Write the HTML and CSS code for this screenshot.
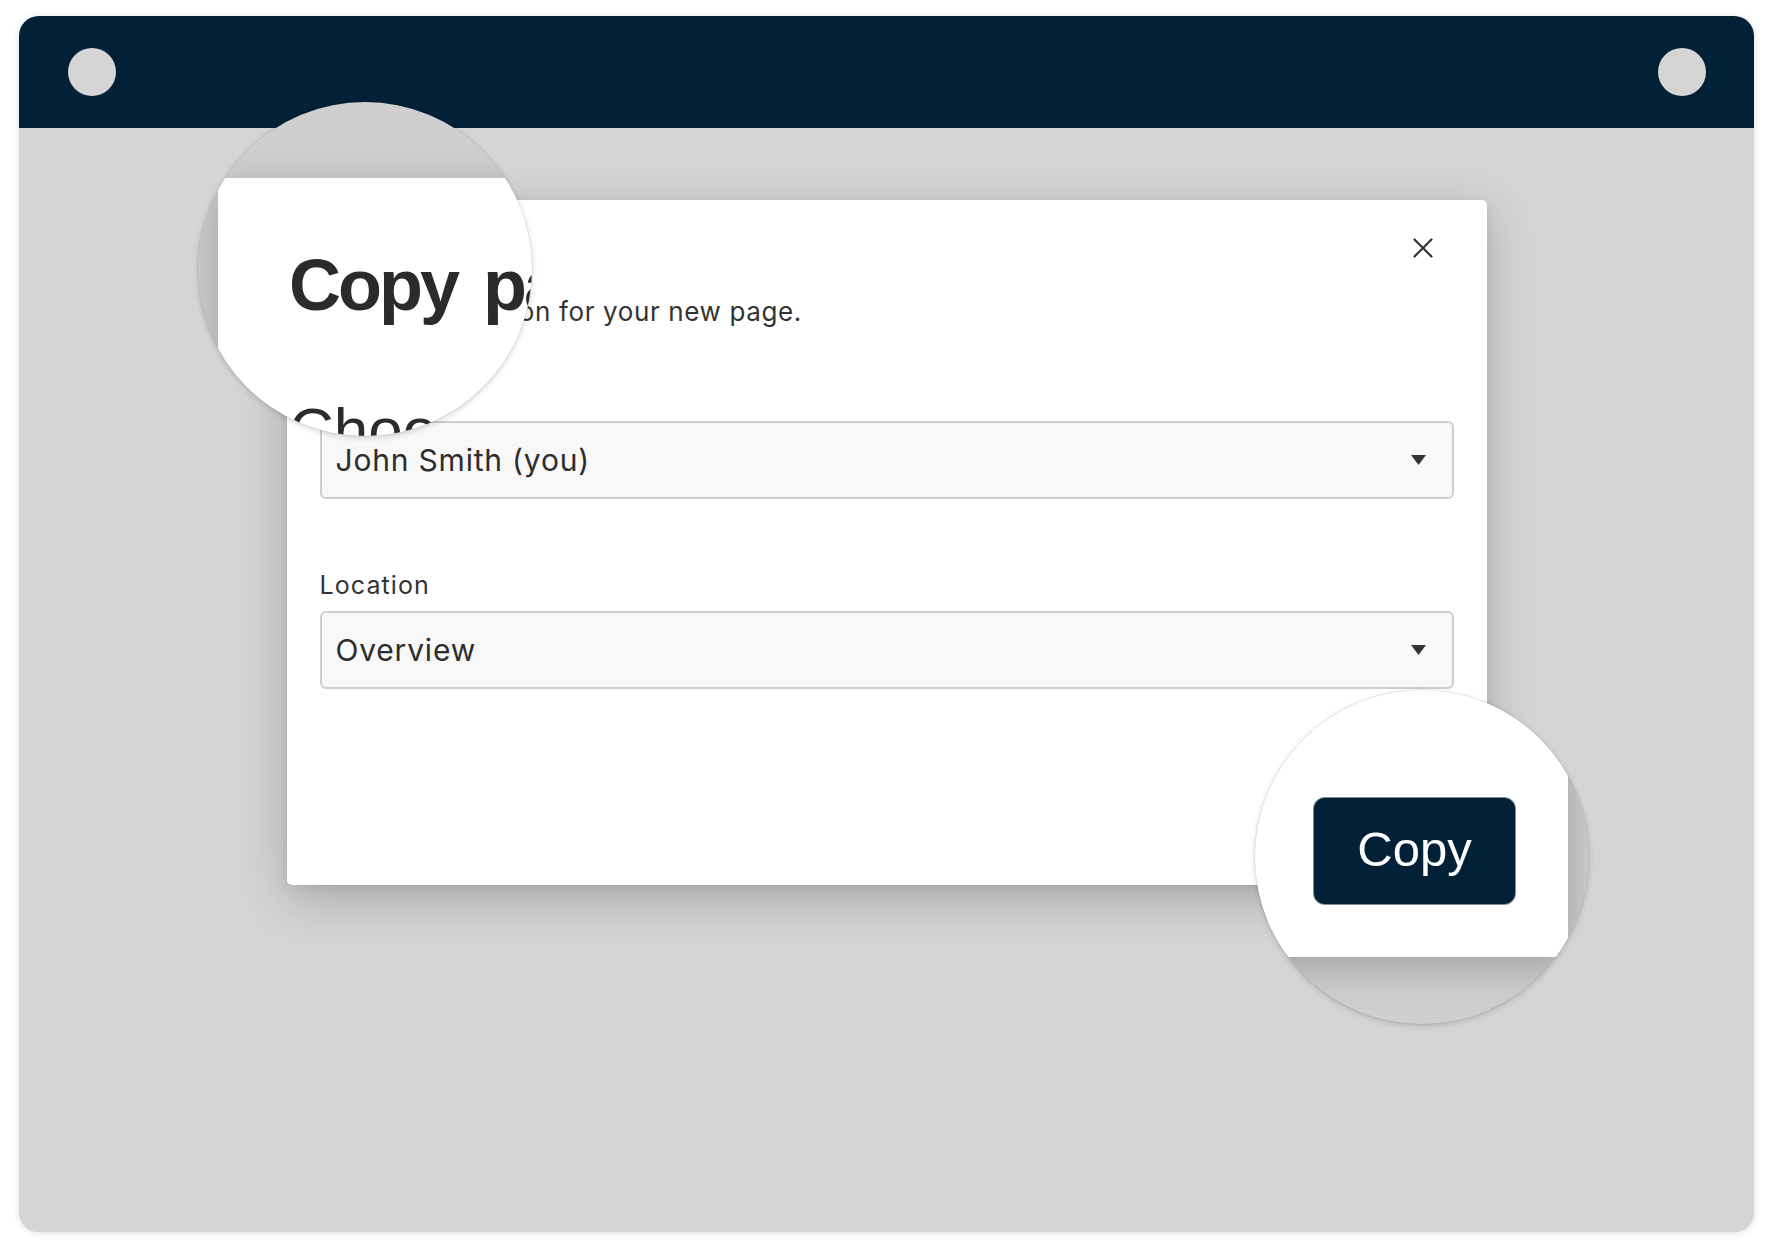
FILE: index.html
```html
<!DOCTYPE html>
<html lang="en">
<head>
<meta charset="utf-8">
<title>Copy page</title>
<link rel="stylesheet" href="styles.css">
</head>
<body>
  <div class="frame">
    <div class="titlebar">
      <span class="dot"></span>
      <span class="dot"></span>
    </div>
    <div class="stage">
      <div class="dialog">
        <div class="dialog-header">
          <h2 class="dialog-title">Copy page</h2>
          <button class="close" aria-label="Close">
            <svg width="20" height="20" viewBox="0 0 20 20"><path d="M1.5 1.5 L18.5 18.5 M18.5 1.5 L1.5 18.5" stroke="#333" stroke-width="2.2" stroke-linecap="round" fill="none"/></svg>
          </button>
        </div>
        <p class="dialog-desc">Choose a location for your new page.</p>
        <div class="field field-first">
          <div class="field-label">Owner</div>
          <div class="select">
            <span class="select-value">John Smith (you)</span>
            <svg class="caret" width="15" height="10" viewBox="0 0 15 10"><polygon points="0,0 15,0 7.5,10" fill="#333"/></svg>
          </div>
        </div>
        <div class="field field-second">
          <div class="field-label">Location</div>
          <div class="select">
            <span class="select-value">Overview</span>
            <svg class="caret" width="15" height="10" viewBox="0 0 15 10"><polygon points="0,0 15,0 7.5,10" fill="#333"/></svg>
          </div>
        </div>
        <div class="dialog-footer">
          <button class="btn-primary">Copy</button>
        </div>
      </div>
    </div>

    <div class="lens lens-top">
      <div class="lens-panel lens-panel-tl">
        <div class="lens-heading">Copy page</div>
        <div class="lens-desc">Choose a location for your new page.</div>
      </div>
    </div>

    <div class="lens lens-bottom">
      <div class="lens-panel lens-panel-br">
        <div class="lens-btn">Copy</div>
      </div>
    </div>
  </div>
</body>
</html>
```

FILE: styles.css
```css
* { box-sizing: border-box; }

html, body {
  margin: 0;
  background: #ffffff;
}

body {
  padding: 16px 20px 24px 19px;
  font-family: "Inter", "Noto Sans", sans-serif;
  color: #2d2d2d;
}

.frame {
  position: relative;
  width: 1735px;
  height: 1216px;
  border-radius: 20px;
  overflow: hidden;
  box-shadow: 0 1px 7px rgba(0, 0, 0, 0.13);
  background: #d5d5d5;
}

.titlebar {
  height: 112px;
  background: #022036;
  display: flex;
  align-items: center;
  justify-content: space-between;
  padding: 0 48px 0 49px;
}

.dot {
  width: 48px;
  height: 48px;
  border-radius: 50%;
  background: #d5d5d5;
}

.stage {
  height: 1104px;
  background: #d5d5d5;
  padding-top: 72px;
}

.dialog {
  width: 1200px;
  height: 685px;
  margin: 0 auto;
  background: #ffffff;
  border-radius: 5px;
  box-shadow: 0 14px 50px rgba(0, 0, 0, 0.22), 0 2px 8px rgba(0, 0, 0, 0.08);
  padding: 28px 33px 33px 33px;
  display: flex;
  flex-direction: column;
}

.dialog-header {
  height: 40px;
  display: flex;
  align-items: center;
  justify-content: space-between;
}

.dialog-title {
  margin: 0;
  font-size: 32px;
  line-height: 40px;
  font-weight: 700;
}

.close {
  width: 62px;
  height: 40px;
  border: 0;
  background: transparent;
  padding: 0;
  display: flex;
  align-items: center;
  justify-content: center;
}

.dialog-desc {
  margin: 28px 0 0 0;
  font-size: 26px;
  line-height: 32px;
  letter-spacing: 0.62px;
  color: #333;
}

.field-first { margin-top: 51px; }
.field-second { margin-top: 70px; }

.field-label {
  font-size: 25px;
  line-height: 32px;
  margin-bottom: 10px;
  letter-spacing: 1.1px;
  color: #333;
}

.select {
  height: 78px;
  border: 2px solid #c9cfd2;
  border-radius: 6px;
  background: #f8f8f8;
  display: flex;
  align-items: center;
  justify-content: space-between;
  padding: 0 26px 0 14px;
}

.select-value {
  font-size: 30px;
  letter-spacing: 0.8px;
}

.caret { display: block; }

.dialog-footer {
  margin-top: auto;
  display: flex;
  justify-content: flex-end;
}

.btn-primary {
  width: 90px;
  height: 47px;
  border: 0;
  border-radius: 5px;
  background: #022036;
  color: #fff;
  font-family: "Liberation Sans", sans-serif;
  font-size: 21px;
}

/* magnifier lenses */
.lens {
  position: absolute;
  width: 334px;
  height: 334px;
  border-radius: 50%;
  overflow: hidden;
  background: #cfcfcf;
  box-shadow: 0 0 0 1px rgba(0, 0, 0, 0.05), 0 2px 6px rgba(0, 0, 0, 0.16);
}

.lens-top { left: 179px; top: 86px; }
.lens-bottom { left: 1236px; top: 674px; }

.lens-panel {
  position: absolute;
  background: #ffffff;
  box-shadow: 0 10px 42px rgba(0, 0, 0, 0.24);
  font-family: "Liberation Sans", "Arial", sans-serif;
  color: #2b2b2b;
}

.lens-panel-tl {
  left: 20px;
  top: 76px;
  width: 420px;
  height: 360px;
  border-top-left-radius: 8px;
  padding: 71px 0 0 71px;
  white-space: nowrap;
}

.lens-heading {
  font-size: 72px;
  line-height: 72px;
  font-weight: 700;
  letter-spacing: -3px;
  word-spacing: 9px;
}

.lens-desc {
  margin-top: 78px;
  font-size: 62px;
  line-height: 62px;
}

.lens-panel-br {
  left: -40px;
  top: -40px;
  width: 353px;
  height: 307px;
  border-bottom-right-radius: 4px;
  display: flex;
  justify-content: flex-end;
  align-items: flex-end;
  padding: 0 53px 53px 0;
}

.lens-btn {
  width: 201px;
  height: 106px;
  border-radius: 11px;
  background: #022036;
  box-shadow: 0 0 0 1px #7d8d99;
  color: #ffffff;
  font-size: 49px;
  display: flex;
  align-items: center;
  justify-content: center;
  padding-bottom: 4px;
}
```
